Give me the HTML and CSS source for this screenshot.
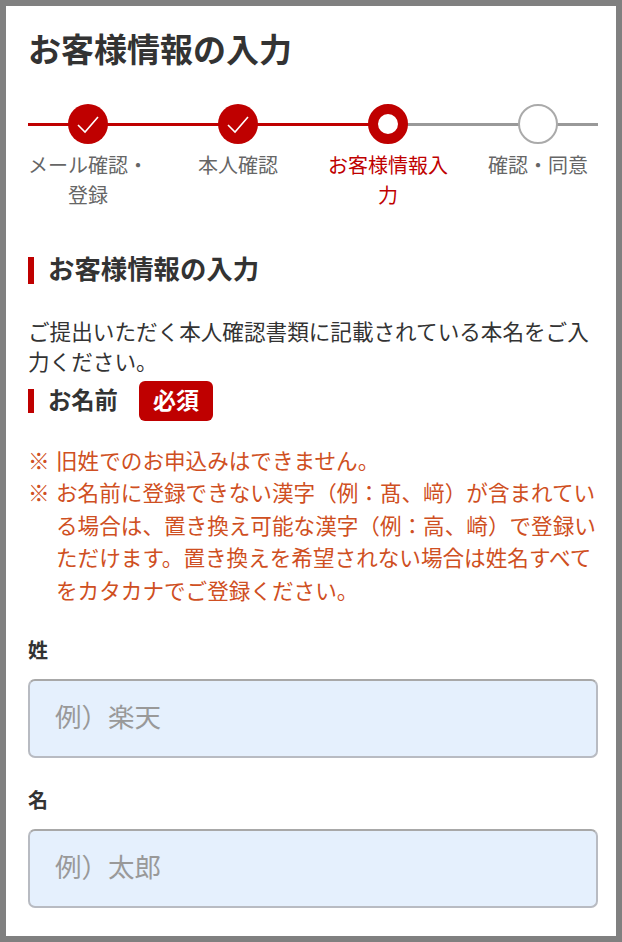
FILE: index.html
```html
<!DOCTYPE html>
<html lang="ja">

<head>
    <meta charset="UTF-8">
    <title>お客様情報の入力</title>
    <link rel="stylesheet" href="styles.css">
</head>

<body>
    <div class="container">
        <h1>お客様情報の入力</h1>

        <!-- Steps -->
        <ol class="stepper">
            <li class="step done">
                <span class="circle">
                    <svg viewBox="0 0 40 40" width="40" height="40"><path d="M10 21l7 7 13-15" fill="none" stroke="#fff" stroke-width="1.6"/></svg>
                </span>
                メール確認・登録
            </li>
            <li class="step done">
                <span class="circle">
                    <svg viewBox="0 0 40 40" width="40" height="40"><path d="M10 21l7 7 13-15" fill="none" stroke="#fff" stroke-width="1.6"/></svg>
                </span>
                本人確認
            </li>
            <li class="step current">
                <span class="circle"></span>
                お客様情報入力
            </li>
            <li class="step">
                <span class="circle"></span>
                確認・同意
            </li>
        </ol>

        <h2 class="section-title">お客様情報の入力</h2>
        <p class="lead">ご提出いただく本人確認書類に記載されている本名をご入力ください。</p>

        <div class="name-head">
            <h3 class="name-title">お名前</h3>
            <span class="badge">必須</span>
        </div>

        <ul class="notes">
            <li>旧姓でのお申込みはできません。</li>
            <li>お名前に登録できない漢字（例：髙、﨑）が含まれている場合は、置き換え可能な漢字（例：高、崎）で登録いただけます。置き換えを希望されない場合は姓名すべてをカタカナでご登録ください。</li>
        </ul>

        <!-- Name inputs -->
        <label class="field-label" for="last-name">姓</label>
        <input class="field" id="last-name" type="text" placeholder="例）楽天">

        <label class="field-label" for="first-name">名</label>
        <input class="field" id="first-name" type="text" placeholder="例）太郎">
    </div>
</body>

</html>
```

FILE: styles.css
```css
/* Basic Reset */
* {
    margin: 0;
    padding: 0;
    box-sizing: border-box;
}

body {
    font-family: "Liberation Sans", "Noto Sans CJK JP", sans-serif;
    background-color: #808080;
    color: #333;
    padding: 6px;
    height: 942px;
    overflow: hidden;
}

.container {
    background-color: white;
    height: 930px;
    padding: 27px 18px 0 22px;
    overflow: hidden;
}

h1 {
    font-size: 33px;
    line-height: 36px;
}

/* Steps */
.stepper {
    position: relative;
    list-style: none;
    display: grid;
    grid-template-columns: repeat(4, 120px);
    gap: 30px;
    margin-top: 35px;
}

.stepper::before,
.stepper::after {
    content: "";
    position: absolute;
    left: 0;
    top: 19px;
    height: 3px;
    background-color: #999;
    width: 100%;
}

.stepper::after {
    background-color: #bf0000;
    width: 63%;
}

.step {
    position: relative;
    z-index: 1;
    display: flex;
    flex-direction: column;
    align-items: center;
    text-align: center;
    font-size: 20px;
    line-height: 30px;
    color: #666;
}

.step.current {
    color: #bf0000;
}

.circle {
    width: 40px;
    height: 40px;
    border-radius: 50%;
    border: 2px solid #aaa;
    background-color: white;
    margin-bottom: 7px;
}

.done .circle {
    border: 0;
    background-color: #bf0000;
}

.current .circle {
    border: 10px solid #bf0000;
}

/* Headings */
.section-title {
    font-size: 26.4px;
    line-height: 27px;
    border-left: 6px solid #bf0000;
    padding-left: 14px;
    margin-top: 46px;
}

.lead {
    font-size: 21.6px;
    line-height: 30px;
    margin-top: 34px;
}

.name-head {
    display: flex;
    align-items: center;
    gap: 21px;
    margin-top: 3px;
}

.name-title {
    font-size: 23.3px;
    line-height: 24px;
    border-left: 6px solid #bf0000;
    padding-left: 14px;
}

.badge {
    width: 74px;
    height: 40px;
    border-radius: 6px;
    background-color: #bf0000;
    color: white;
    font-size: 23px;
    font-weight: bold;
    line-height: 40px;
    text-align: center;
}

/* Notes */
.notes {
    list-style: none;
    margin-top: 25px;
    color: #cf4f22;
    font-size: 21.6px;
    line-height: 32.4px;
}

.notes li {
    position: relative;
    padding-left: 28px;
}

.notes li::before {
    content: "※";
    position: absolute;
    left: 0;
}

/* Inputs */
.field-label {
    display: block;
    font-size: 20px;
    font-weight: bold;
    line-height: 30px;
    margin-top: 28px;
}

.field {
    display: block;
    width: 100%;
    height: 79px;
    margin-top: 13px;
    padding: 0 25px;
    border: 2px solid #b8bbc2;
    border-top-color: #a8a8a8;
    border-radius: 7px;
    background-color: #e5f0fd;
    font-family: inherit;
    font-size: 26.5px;
}

.field::placeholder {
    color: #999;
}

.field + .field-label {
    margin-top: 28px;
}
```
